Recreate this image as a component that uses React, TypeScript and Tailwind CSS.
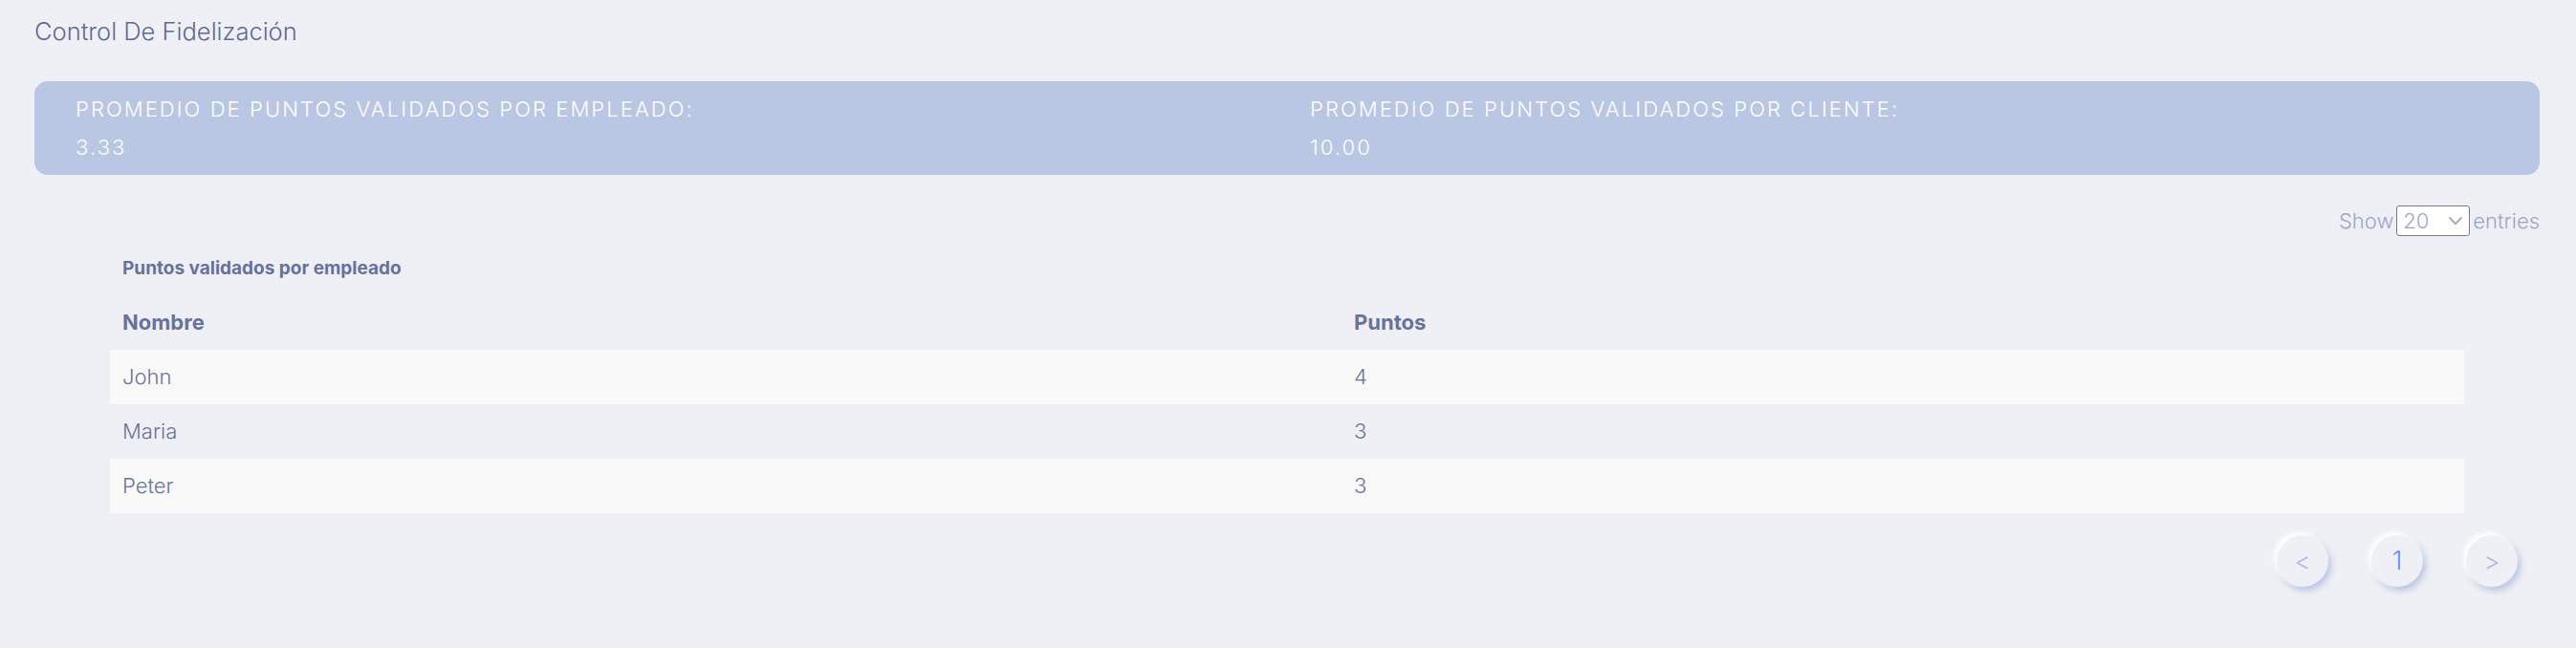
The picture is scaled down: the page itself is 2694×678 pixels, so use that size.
import React from "react";

const rows = [
  { name: "John", points: 4 },
  { name: "Maria", points: 3 },
  { name: "Peter", points: 3 },
];

function Chevron() {
  return (
    <svg width="16" height="10" viewBox="0 0 16 10" fill="none">
      <path d="M1.5 1.5 L8 8 L14.5 1.5" stroke="#8d97b8" strokeWidth="1.6" />
    </svg>
  );
}

export default function App() {
  return (
    <div
      className="min-h-[678px] w-full bg-[#eff0f5] pl-[36px] pr-[38px] pt-[15px]"
      style={{ fontFamily: "Inter, 'Noto Sans', sans-serif" }}
    >
      {/* Page title */}
      <h1 className="text-[25.5px] leading-[36px] font-light text-[#5f6b92]">
        Control De Fidelización
      </h1>

      {/* Summary box */}
      <div className="mt-[34px] grid grid-cols-2 gap-[48px] rounded-[14px] bg-[#b9c7e4] px-[43px] py-[9px] text-white">
        <div className="text-[22px] font-light leading-[40px] tracking-[0.095em]">
          <p>PROMEDIO DE PUNTOS VALIDADOS POR EMPLEADO:</p>
          <p>3.33</p>
        </div>
        <div className="text-[22px] font-light leading-[40px] tracking-[0.095em]">
          <p>PROMEDIO DE PUNTOS VALIDADOS POR CLIENTE:</p>
          <p>10.00</p>
        </div>
      </div>

      {/* Entries selector */}
      <div className="mt-[32px] flex h-[32px] items-center justify-end text-[22px] font-light text-[#9aa6c9]">
        <span>Show</span>
        <div className="mx-[3px] flex h-[32px] w-[77px] items-center justify-between rounded-[3px] border border-[#777a86] bg-white pl-[6px] pr-[6px]">
          <span className="leading-none">20</span>
          <Chevron />
        </div>
        <span>entries</span>
      </div>

      {/* Table */}
      <div className="mx-[79px] mt-[20px]">
        <p className="pl-[13px] text-[19px] font-bold leading-[28px] text-[#67739b]">
          Puntos validados por empleado
        </p>
        <div className="mt-[14px] grid h-[57px] grid-cols-[1288px_1fr] items-center text-[22px] font-bold text-[#67739b]">
          <div className="pl-[13px]">Nombre</div>
          <div className="pl-[13px]">Puntos</div>
        </div>
        {rows.map((r, i) => (
          <div
            key={r.name}
            className={
              "grid h-[57px] grid-cols-[1288px_1fr] items-center text-[22px] font-light text-[#68749b] " +
              (i % 2 === 0 ? "bg-[#f9f9fa]" : "bg-transparent")
            }
          >
            <div className="pl-[13px]">{r.name}</div>
            <div className="pl-[13px]">{r.points}</div>
          </div>
        ))}
      </div>

      {/* Pagination */}
      <div className="mt-[23px] flex justify-end gap-[45px] pr-[23px]">
        <button className="flex h-[54px] w-[54px] items-center justify-center rounded-full bg-[#eff0f5] text-[26px] font-light text-[#aebbe6] shadow-[-3px_-3px_5px_#ffffff,3px_4px_7px_rgba(120,145,215,0.45)]">
          &lt;
        </button>
        <button className="flex h-[54px] w-[54px] items-center justify-center rounded-full bg-[#eff0f5] text-[27px] font-light text-[#6b8ef0] shadow-[-3px_-3px_5px_#ffffff,3px_4px_7px_rgba(120,145,215,0.45)]">
          1
        </button>
        <button className="flex h-[54px] w-[54px] items-center justify-center rounded-full bg-[#eff0f5] text-[26px] font-light text-[#aebbe6] shadow-[-3px_-3px_5px_#ffffff,3px_4px_7px_rgba(120,145,215,0.45)]">
          &gt;
        </button>
      </div>
    </div>
  );
}
